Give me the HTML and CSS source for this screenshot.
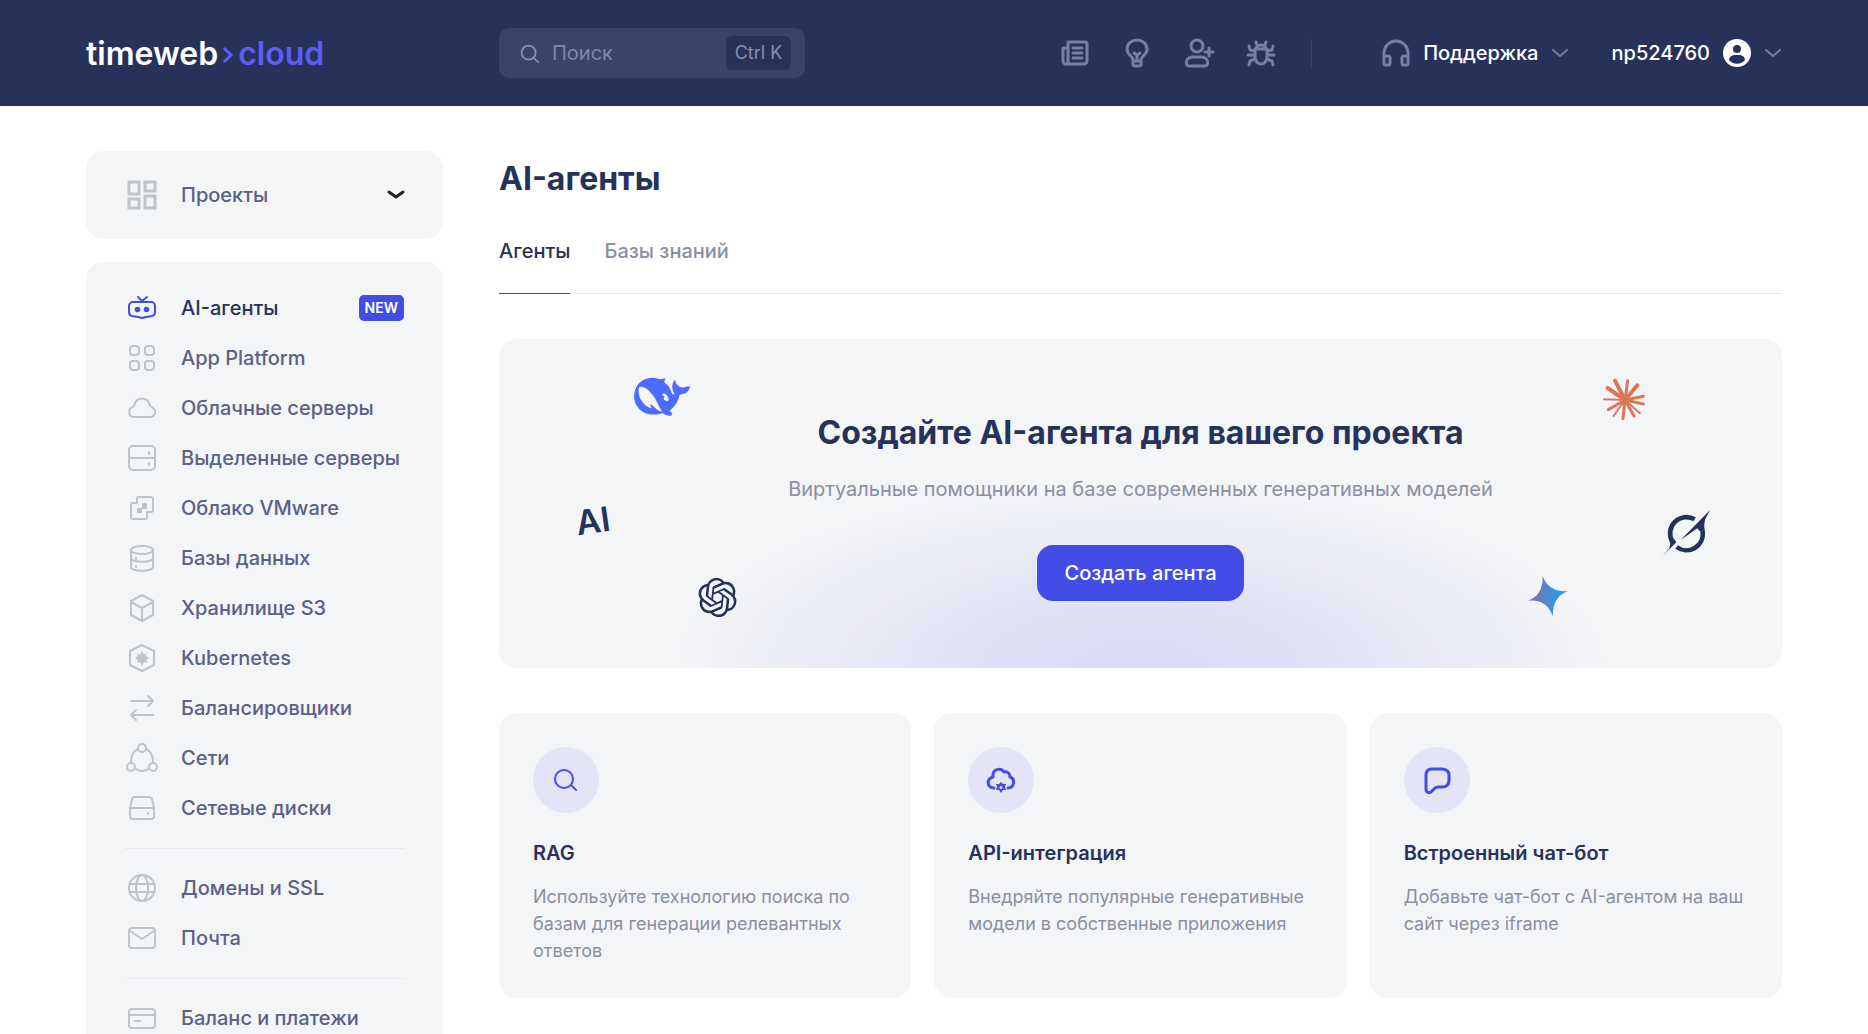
FILE: index.html
```html
<!DOCTYPE html>
<html lang="ru">
<head>
    <meta charset="UTF-8" />
    <meta name="viewport" content="width=device-width, initial-scale=1">
    <title>AI-агенты</title>
    <link rel="stylesheet" href="styles.css">
</head>
<body>
    <header class="topbar">
      <a href="#" class="logo">timeweb<svg class="logo-arrow" viewBox="0 0 12 20"><path d="M2 3l7 7-7 7"/></svg><span>cloud</span></a>
      <div class="topbar-main">
        <label class="search">
          <svg class="icon" viewBox="0 0 24 24"><circle cx="11" cy="11" r="8"/><path d="M17 17l5 5"/></svg>
          <input type="text" placeholder="Поиск" aria-label="Поиск">
          <kbd>Ctrl K</kbd>
        </label>
        <nav class="tools">
          <a href="#" aria-label="Новости"><svg class="icon" viewBox="0 0 28 28"><path d="M7 3h17a2 2 0 0 1 2 2v17a3 3 0 0 1-3 3H5a3 3 0 0 1-3-3V9h5M7 3v19a2 2 0 0 1-2 3M12 9h9M12 14h9M12 19h9"/></svg></a>
          <a href="#" aria-label="Идеи"><svg class="icon" viewBox="0 0 28 28"><path d="M10 21c0-4-6-5-6-11a10 9 0 0 1 20 0c0 6-6 7-6 11v4a2 2 0 0 1-2 2h-4a2 2 0 0 1-2-2zM10 22h8M14 22v-6M11 14l3 2 3-2"/></svg></a>
          <a href="#" aria-label="Пригласить"><svg class="icon" viewBox="0 0 28 28"><circle cx="12" cy="7" r="6"/><path d="M8 18h8c8 0 8 9 4 9H4c-4 0-4-9 4-9zM24 9v8M20 13h8"/></svg></a>
          <a href="#" aria-label="Сообщить об ошибке"><svg class="icon" viewBox="0 0 28 28"><path d="M8 10h12v8a6 7 0 0 1-12 0zM9 10a5 4 0 0 1 10 0M10 6L9 3M18 6l1-3M8 12l-5-1-1-4M20 12l5-1 1-4M8 16H1M20 16h7M8 20l-5 2-1 4M20 20l5 2 1 4"/></svg></a>
        </nav>
        <button class="support">
          <svg class="icon" viewBox="0 0 28 28"><path d="M2 24V14a12 12 0 0 1 24 0v10a2 2 0 0 1-2 2h-2a2 2 0 0 1-2-2v-5a2 2 0 0 1 2-2h4M2 17h4a2 2 0 0 1 2 2v5a2 2 0 0 1-2 2H4a2 2 0 0 1-2-2"/></svg>
          Поддержка
          <svg class="chevron" viewBox="0 0 18 18"><path d="M2 6l7 6 7-6"/></svg>
        </button>
        <button class="user">
          np524760
          <svg class="avatar" viewBox="0 0 28 28"><circle cx="14" cy="14" r="14" fill="#fff"/><circle cx="14" cy="10" r="4" fill="#27325b"/><path d="M6 21c1-5 4-5 8-5s7 0 8 5c-4 5-12 5-16 0z" fill="#27325b"/></svg>
          <svg class="chevron" viewBox="0 0 18 18"><path d="M2 6l7 6 7-6"/></svg>
        </button>
      </div>
    </header>

    <div class="page">
      <aside class="sidebar">
        <button class="projects">
          <svg class="icon square" viewBox="0 0 28 28"><path d="M1 1h10v12H1zM17 1h10v9H17zM1 18h10v9H1zM17 15h10v12H17z"/></svg>
          Проекты
          <svg class="chevron" viewBox="0 0 18 18"><path d="M2 6l7 5 7-5"/></svg>
        </button>
        <nav class="menu">
          <a href="#" class="active">
            <svg class="icon" viewBox="0 0 28 28"><path d="M5 8h18a4 4 0 0 1 4 4v6a4 4 0 0 1-3 4l-6 1-4 1-4-1-6-1a4 4 0 0 1-3-4v-6a4 4 0 0 1 4-4zM10 3l4 4 5-4"/><circle class="dot" cx="9.500" cy="15.500" r="2.800"/><circle class="dot" cx="18.500" cy="15.500" r="2.800"/></svg>
            AI-агенты <span class="badge">NEW</span>
          </a>
          <a href="#"><svg class="icon" viewBox="0 0 28 28"><rect x="2" y="2" width="9" height="9" rx="3"/><rect x="17" y="2" width="9" height="9" rx="3"/><rect x="2" y="17" width="9" height="9" rx="3"/><rect x="17" y="17" width="9" height="9" rx="3"/></svg>App Platform</a>
          <a href="#"><svg class="icon" viewBox="0 0 28 28"><path d="M6 23h16c5 0 7-6 3-9l-3-2c-2-10-14-10-16 0-7 3-6 11 0 11z"/></svg>Облачные серверы</a>
          <a href="#"><svg class="icon" viewBox="0 0 28 28"><rect x="1" y="2" width="26" height="24" rx="4"/><path d="M1 14h26M21 8v2M21 19v2"/></svg>Выделенные серверы</a>
          <a href="#"><svg class="icon" viewBox="0 0 28 28"><path d="M9 9V5a2 2 0 0 1 2-2h12a2 2 0 0 1 2 2v11a2 2 0 0 1-2 2h-4v5a2 2 0 0 1-2 2H5a2 2 0 0 1-2-2V11a2 2 0 0 1 2-2z"/><path class="dot" d="M9 14h5V9h5v6h-5v4H9z"/></svg>Облако VMware</a>
          <a href="#"><svg class="icon" viewBox="0 0 28 28"><ellipse cx="14" cy="6" rx="11" ry="4"/><path d="M3 6v17c0 5 22 5 22 0V6M3 14c0 5 22 5 22 0M8 14v1M8 22v1"/></svg>Базы данных</a>
          <a href="#"><svg class="icon" viewBox="0 0 28 28"><path d="M14 1l11 6v14l-11 6-11-6V7zM3 8l11 6 11-6M14 14v13"/></svg>Хранилище S3</a>
          <a href="#"><svg class="icon" viewBox="0 0 28 28"><path d="M14 1l12 6v14l-12 6-12-6V7z"/><path class="dot" d="M14 7l2 4 3-2-1 3 3 2-3 2 1 3-3-1-2 4-2-4-3 1 1-3-3-2 3-2-1-3 3 2z"/></svg>Kubernetes</a>
          <a href="#"><svg class="icon" viewBox="0 0 28 28"><path d="M3 7h21M20 2l5 5-5 5M25 21H4M8 16l-5 5 5 5"/></svg>Балансировщики</a>
          <a href="#"><svg class="icon" viewBox="0 0 28 28"><circle cx="14" cy="4" r="4"/><circle cx="3" cy="23" r="4"/><circle cx="25" cy="23" r="4"/><path d="M10 5q-7 3-7 13M18 5q7 3 7 13M8 25q6 4 12 0"/></svg>Сети</a>
          <a href="#"><svg class="icon" viewBox="0 0 28 28"><path d="M7 3h14a3 3 0 0 1 3 2l2 9v8a3 3 0 0 1-3 3H5a3 3 0 0 1-3-3v-8l2-9a3 3 0 0 1 3-2zM2 14h24M20 19v1"/></svg>Сетевые диски</a>
          <hr>
          <a href="#"><svg class="icon" viewBox="0 0 28 28"><circle cx="14" cy="14" r="13"/><ellipse cx="14" cy="14" rx="6" ry="13"/><path d="M2 10h24M2 18h24"/></svg>Домены и SSL</a>
          <a href="#"><svg class="icon" viewBox="0 0 28 28"><rect x="1" y="4" width="26" height="20" rx="3"/><path d="M2 7l12 8 12-8"/></svg>Почта</a>
          <hr>
          <a href="#"><svg class="icon" viewBox="0 0 28 28"><rect x="1" y="5" width="26" height="19" rx="3"/><path d="M1 11h26M7 17h5"/></svg>Баланс и платежи</a>
        </nav>
      </aside>

      <main class="content">
        <h1>AI-агенты</h1>
        <div class="tabs">
          <a href="#" class="active">Агенты</a>
          <a href="#">Базы знаний</a>
        </div>

        <section class="hero">
          <h2>Создайте AI-агента для вашего проекта</h2>
          <p>Виртуальные помощники на базе современных генеративных моделей</p>
          <button class="create">Создать агента</button>

          <svg class="brand whale" viewBox="0 0 168 116"><path fill="#4d6bfe" fill-rule="evenodd" d="M72 5C80 9 87 3 95 5 93 9 88 12 93 18 104 25 109 36 113 47 117 55 121 53 121 49 114 40 111 22 122 10 126 10 124 20 131 25 139 31 147 34 154 30 160 27 163 29 168 28 165 45 154 52 137 53 133 74 121 90 106 102L115 109C114 113 112 114 112 116 103 116 94 116 86 108 48 122 8 104 1 68-5 28 27-7 72 5zM18 29C11 31 13 56 21 69 30 84 42 92 53 94L48 82C57 82 66 103 85 104L80 97C75 89 70 76 63 64 49 43 36 28 18 29zM86 50C91 49 100 52 103 64 107 72 98 75 94 70 88 70 88 61 92 60 92 56 82 57 86 50z"/></svg>
          <span class="brand ai-mark">AI</span>
          <svg class="brand openai" viewBox="0 0 24 24"><path fill="#27325b" d="M22.2819 9.8211a5.9847 5.9847 0 0 0-.5157-4.9108 6.0462 6.0462 0 0 0-6.5098-2.9A6.0651 6.0651 0 0 0 4.9807 4.1818a5.9847 5.9847 0 0 0-3.9977 2.9 6.0462 6.0462 0 0 0 .7427 7.0966 5.98 5.98 0 0 0 .511 4.9107 6.051 6.051 0 0 0 6.5146 2.9001A5.9847 5.9847 0 0 0 13.2599 24a6.0557 6.0557 0 0 0 5.7718-4.2058 5.9894 5.9894 0 0 0 3.9977-2.9001 6.0557 6.0557 0 0 0-.7475-7.0729zm-9.022 12.6081a4.4755 4.4755 0 0 1-2.8764-1.0408l.1419-.0804 4.7783-2.7582a.7948.7948 0 0 0 .3927-.6813v-6.7369l2.02 1.1686a.071.071 0 0 1 .038.052v5.5826a4.504 4.504 0 0 1-4.4945 4.4944zm-9.6607-4.1254a4.4708 4.4708 0 0 1-.5346-3.0137l.142.0852 4.783 2.7582a.7712.7712 0 0 0 .7806 0l5.8428-3.3685v2.3324a.0804.0804 0 0 1-.0332.0615L9.74 19.9502a4.4992 4.4992 0 0 1-6.1408-1.6464zM2.3408 7.8956a4.485 4.485 0 0 1 2.3655-1.9728V11.6a.7664.7664 0 0 0 .3879.6765l5.8144 3.3543-2.0201 1.1685a.0757.0757 0 0 1-.071 0l-4.8303-2.7865A4.504 4.504 0 0 1 2.3408 7.872zm16.5963 3.8558L13.1038 8.364 15.1192 7.2a.0757.0757 0 0 1 .071 0l4.8303 2.7913a4.4944 4.4944 0 0 1-.6765 8.1042v-5.6772a.79.79 0 0 0-.407-.667zm2.0107-3.0231l-.142-.0852-4.7735-2.7818a.7759.7759 0 0 0-.7854 0L9.409 9.2297V6.8974a.0662.0662 0 0 1 .0284-.0615l4.8303-2.7866a4.4992 4.4992 0 0 1 6.6802 4.66zM8.3065 12.863l-2.02-1.1638a.0804.0804 0 0 1-.038-.0567V6.0742a4.4992 4.4992 0 0 1 7.3757-3.4537l-.142.0805L8.704 5.459a.7948.7948 0 0 0-.3927.6813zm1.0976-2.3654l2.602-1.4998 2.6069 1.4998v2.9994l-2.5974 1.4997-2.6067-1.4997Z"/></svg>
          <svg class="brand claude" viewBox="0 0 126 126"><g stroke="#d97757" stroke-linecap="round" fill="none"><path stroke-width="12" d="M66 66L36 8M66 66L14 30M66 66l37-44"/><path stroke-width="9" d="M66 66l8-58M66 66l55-11M66 66l55 12M66 66l27 48M66 66l-6 56M66 66L16 95"/><path stroke-width="6" d="M66 66L3 64M66 66l-34 48M66 66l44 39"/></g></svg>
          <svg class="brand grok" viewBox="0 0 144 140"><g fill="none" stroke="#27325b" stroke-width="14"><path d="M98 28A49 49 0 0 0 31 95"/><path d="M44 111A49 49 0 0 0 122 65"/></g><g fill="#27325b"><path d="M144 0L56 90 106 55 115 65 129 66Q124 48 129 29z"/><path d="M1 139L43 97 37 88 24 91Q26 108 21 116z"/></g></svg>
          <svg class="brand gemini" viewBox="0 0 120 120"><defs><linearGradient id="star" x1="0" y1="0" x2="1" y2="0"><stop offset="0" stop-color="#8e68b4"/><stop offset=".7" stop-color="#3596dc"/><stop offset="1" stop-color="#1ba1e3"/></linearGradient></defs><path fill="url(#star)" d="M44 0Q62 50 120 45 74 62 74 120 56 68 0 74 46 58 44 0z"/></svg>
        </section>

        <section class="cards">
          <article class="card">
            <div class="round"><svg class="icon" viewBox="0 0 28 28"><circle cx="12" cy="13" r="9"/><path d="M19 19l5 5"/></svg></div>
            <h3>RAG</h3>
            <p>Используйте технологию поиска по базам для генерации релевантных ответов</p>
          </article>
          <article class="card">
            <div class="round"><svg class="icon bold" viewBox="0 0 28 28"><path d="M7 22c-7 0-8-9-1-11-1-8 8-10 11-5 4-1 6 2 6 5 6 2 4 11-2 11"/><path class="dot" fill-rule="evenodd" d="M14 16l2 2 3 0-1 3 1 3-3 0-2 3-2-3-3 0 1-3-1-3 3 0zM14 20a1.500 1.500 0 1 0 0 3 1.500 1.500 0 0 0 0-3z"/></svg></div>
            <h3>API-интеграция</h3>
            <p>Внедряйте популярные генеративные модели в собственные приложения</p>
          </article>
          <article class="card">
            <div class="round"><svg class="icon bold" viewBox="0 0 28 28"><path d="M9 3h9c5 0 8 2 8 6v5c0 5-3 7-7 7h-4c-3 0-4 2-6 4-2 3-6 2-6-2V9c0-4 2-6 6-6z"/></svg></div>
            <h3>Встроенный чат-бот</h3>
            <p>Добавьте чат-бот с AI-агентом на ваш сайт через iframe</p>
          </article>
        </section>
      </main>
    </div>
</body>
</html>
```
FILE: styles.css
```css
* {
  box-sizing: border-box;
}

body {
  margin: 0;
  background-color: #fff;
  color: #27325b;
  font-family: Inter, "Open Sans", sans-serif;
  font-size: 20px;
}

a {
  color: inherit;
  text-decoration: none;
}

button {
  border: none;
  background: none;
  padding: 0;
  color: inherit;
  font: inherit;
  cursor: pointer;
}

h1, h2, h3, p {
  margin: 0;
}

.icon {
  width: 28px;
  height: 28px;
  flex: none;
  overflow: visible;
  fill: none;
  stroke: currentColor;
  stroke-width: 2;
  stroke-linecap: round;
  stroke-linejoin: round;
}

.icon .dot {
  fill: currentColor;
  stroke: none;
}

.icon.bold {
  stroke-width: 3;
}

.chevron {
  width: 18px;
  height: 18px;
  flex: none;
  fill: none;
  stroke: #7680a0;
  stroke-width: 2;
  stroke-linecap: round;
  stroke-linejoin: round;
}

/* Top bar */
.topbar, .page {
  display: grid;
  grid-template-columns: 357px minmax(0, 1fr);
  column-gap: 56px;
  padding: 0 86px;
}

.topbar {
  align-items: center;
  height: 106px;
  background-color: #27325b;
  color: #fff;
}

.logo {
  display: flex;
  align-items: center;
  font-size: 32px;
  font-weight: 600;
}

.logo span {
  color: #5a5ef5;
}

.logo-arrow {
  width: 12px;
  height: 20px;
  margin: 4px 4px 0;
  fill: none;
  stroke: #5a5ef5;
  stroke-width: 3;
}

.topbar-main {
  display: flex;
  align-items: center;
}

.search {
  display: flex;
  align-items: center;
  gap: 12px;
  width: 306px;
  height: 50px;
  margin-right: auto;
  padding: 0 14px 0 20px;
  border-radius: 10px;
  background-color: #39446c;
  color: #8990a9;
}

.search .icon {
  width: 21px;
  height: 21px;
}

.search input {
  flex: 1;
  min-width: 0;
  padding: 0;
  border: none;
  outline: none;
  background: none;
  color: #fff;
  font: inherit;
}

.search input::placeholder {
  color: #8088a4;
  opacity: 1;
}

.search kbd {
  width: 65px;
  border-radius: 6px;
  background-color: #27325b;
  font-family: inherit;
  font-size: 18px;
  line-height: 34px;
  text-align: center;
}

.tools {
  display: flex;
  gap: 34px;
  padding-right: 36px;
  border-right: 1px solid #39446c;
  line-height: 0;
  color: #7680a0;
}

.tools .icon, .support .icon {
  stroke-width: 3;
}

.support, .user {
  display: flex;
  align-items: center;
  gap: 13px;
  font-weight: 500;
}

.support {
  margin: 0 42px 0 70px;
}

.support .icon {
  color: #7680a0;
}

.avatar {
  width: 28px;
  height: 28px;
}

/* Sidebar */
.page {
  align-items: start;
  padding-top: 45px;
}

.projects, .menu {
  width: 100%;
  border-radius: 18px;
  background-color: #f3f5f7;
  color: #5c5f86;
  font-weight: 500;
}

.projects {
  display: flex;
  align-items: center;
  gap: 25px;
  height: 88px;
  margin-bottom: 23px;
  padding: 0 38px 0 42px;
}

.projects .icon, .menu .icon {
  color: #c0c4c9;
}

.projects .square {
  stroke-width: 3;
  stroke-linejoin: miter;
}

.projects .chevron {
  margin-left: auto;
  stroke: #222;
  stroke-width: 3;
}

.menu {
  padding: 21px 39px;
}

.menu a {
  display: flex;
  align-items: center;
  gap: 25px;
  height: 50px;
  padding-left: 3px;
}

.menu .active {
  color: #27325b;
}

.menu .active .icon {
  color: #444ce7;
}

.menu hr {
  height: 1px;
  margin: 15px 0 14px;
  border: none;
  background-color: #e7e9ec;
}

.badge {
  margin-left: auto;
  padding: 0 6px;
  border-radius: 5px;
  background-color: #444ce7;
  color: #fff;
  font-size: 14px;
  font-weight: 600;
  line-height: 26px;
}

/* Content */
.content h1 {
  padding: 8px 0 36px;
  font-size: 32px;
  line-height: 40px;
}

.tabs {
  display: flex;
  gap: 34px;
  border-bottom: 1px solid #e3e5ea;
  color: #8a8ea6;
  font-weight: 500;
}

.tabs a {
  margin-bottom: -1px;
  padding-bottom: 26px;
  line-height: 32px;
}

.tabs .active {
  border-bottom: 1px solid #444b85;
  color: #27325b;
}

.hero {
  position: relative;
  display: flex;
  flex-direction: column;
  align-items: center;
  margin: 45px 0;
  padding: 74px 0 67px;
  border-radius: 18px;
  background: radial-gradient(ellipse 36% 56% at 50% 100%, #d8daf7 0%, #dfe1f5 35%, #e9eaf5 65%, #f3f5f7 100%) #f3f5f7;
  text-align: center;
}

.hero h2 {
  font-size: 32px;
  line-height: 40px;
}

.hero p {
  margin: 20px 0 40px;
  color: #8b8fa0;
  line-height: 32px;
}

.create {
  padding: 0 27px;
  border-radius: 16px;
  background-color: #444ce7;
  color: #fff;
  font-weight: 500;
  line-height: 56px;
}

/* Model logos scattered over the banner */
.brand {
  position: absolute;
}

.whale {
  left: 135px;
  top: 38px;
  width: 56px;
}

.ai-mark {
  left: 77px;
  top: 162px;
  font-size: 34px;
  font-weight: 600;
  line-height: 40px;
  transform: rotate(-8deg);
}

.openai {
  left: 199px;
  top: 239px;
  width: 39px;
  transform: rotate(6deg);
}

.claude {
  right: 137px;
  top: 39px;
  width: 42px;
}

.grok {
  right: 72px;
  top: 171px;
  width: 48px;
}

.gemini {
  right: 214px;
  top: 237px;
  width: 40px;
}

.cards {
  display: grid;
  grid-template-columns: repeat(3, minmax(0, 1fr));
  gap: 23px;
}

.card {
  min-height: 284px;
  padding: 34px;
  border-radius: 18px;
  background-color: #f3f5f7;
}

.round {
  display: flex;
  align-items: center;
  justify-content: center;
  width: 66px;
  height: 66px;
  border-radius: 50%;
  background-color: #e3e4f6;
  color: #444ce7;
}

.card h3 {
  margin: 24px 0 14px;
  font-size: 20px;
  font-weight: 600;
  line-height: 32px;
}

.card p {
  color: #8b8fa0;
  font-size: 18px;
  line-height: 27px;
}
```
